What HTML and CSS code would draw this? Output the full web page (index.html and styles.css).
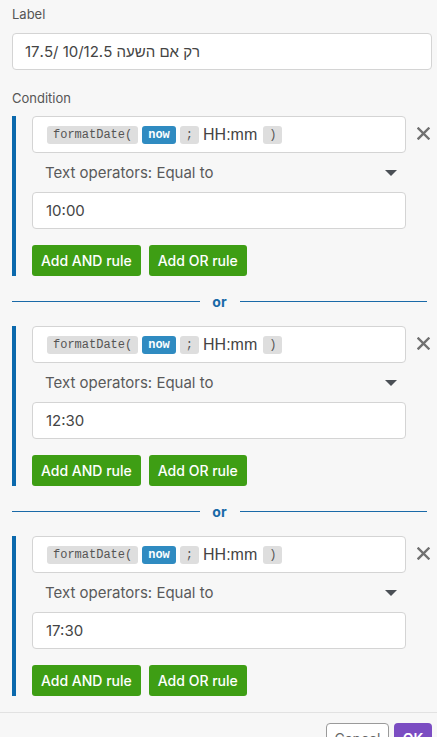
FILE: index.html
```html
<!DOCTYPE html>
<html lang="en">
<head>
<meta charset="utf-8">
<link rel="stylesheet" href="styles.css">
</head>
<body>
<div class="panel">
  <div class="field-label">Label</div>
  <div class="input label-input">17.5/ 10/12.5 רק אם השעה</div>
  <div class="field-label cond-label">Condition</div>

  <div class="group">
    <div class="rule">
      <div class="rule-main">
        <div class="input formula"><span class="chip">formatDate(</span><span class="chip chip-var">now</span><span class="chip">;</span><span class="plain">HH:mm</span><span class="chip">)</span></div>
        <div class="select"><span>Text operators: Equal to</span><svg class="caret" width="12" height="6" viewBox="0 0 12 6"><path d="M0 0H12L6 6Z" fill="#4a4f55"/></svg></div>
        <div class="input value">10:00</div>
      </div>
      <div class="remove"><svg width="13" height="13" viewBox="0 0 13 13"><path d="M1.5 1.5L11.5 11.5M11.5 1.5L1.5 11.5" stroke="#707070" stroke-width="2.4" stroke-linecap="square"/></svg></div>
    </div>
    <div class="actions"><button class="btn-green">Add AND rule</button><button class="btn-green">Add OR rule</button></div>
  </div>

  <div class="or"><span class="or-line"></span><span class="or-text">or</span><span class="or-line"></span></div>

  <div class="group">
    <div class="rule">
      <div class="rule-main">
        <div class="input formula"><span class="chip">formatDate(</span><span class="chip chip-var">now</span><span class="chip">;</span><span class="plain">HH:mm</span><span class="chip">)</span></div>
        <div class="select"><span>Text operators: Equal to</span><svg class="caret" width="12" height="6" viewBox="0 0 12 6"><path d="M0 0H12L6 6Z" fill="#4a4f55"/></svg></div>
        <div class="input value">12:30</div>
      </div>
      <div class="remove"><svg width="13" height="13" viewBox="0 0 13 13"><path d="M1.5 1.5L11.5 11.5M11.5 1.5L1.5 11.5" stroke="#707070" stroke-width="2.4" stroke-linecap="square"/></svg></div>
    </div>
    <div class="actions"><button class="btn-green">Add AND rule</button><button class="btn-green">Add OR rule</button></div>
  </div>

  <div class="or"><span class="or-line"></span><span class="or-text">or</span><span class="or-line"></span></div>

  <div class="group">
    <div class="rule">
      <div class="rule-main">
        <div class="input formula"><span class="chip">formatDate(</span><span class="chip chip-var">now</span><span class="chip">;</span><span class="plain">HH:mm</span><span class="chip">)</span></div>
        <div class="select"><span>Text operators: Equal to</span><svg class="caret" width="12" height="6" viewBox="0 0 12 6"><path d="M0 0H12L6 6Z" fill="#4a4f55"/></svg></div>
        <div class="input value">17:30</div>
      </div>
      <div class="remove"><svg width="13" height="13" viewBox="0 0 13 13"><path d="M1.5 1.5L11.5 11.5M11.5 1.5L1.5 11.5" stroke="#707070" stroke-width="2.4" stroke-linecap="square"/></svg></div>
    </div>
    <div class="actions"><button class="btn-green">Add AND rule</button><button class="btn-green">Add OR rule</button></div>
  </div>
</div>
<div class="footer">
  <button class="btn-cancel">Cancel</button>
  <button class="btn-ok">OK</button>
</div>
</body>
</html>
```

FILE: styles.css
```css
html, body {
  margin: 0;
  padding: 0;
  background: #f7f7f7;
  font-family: Inter, "Noto Sans", "Noto Sans CJK SC", sans-serif;
  color: #555;
  overflow: hidden;
}

.panel {
  padding: 6px 5px 16px 12px;
}

.field-label {
  font-size: 13px;
  line-height: 16px;
  color: #555;
}

.input {
  box-sizing: border-box;
  background: #fff;
  border: 1px solid #d4d4d4;
  border-radius: 4px;
  height: 37px;
  display: flex;
  align-items: center;
  font-size: 15px;
  color: #444;
}

.label-input {
  margin-top: 11px;
  padding-left: 12px;
}

.cond-label {
  margin-top: 20px;
  margin-bottom: 10px;
}

.group {
  border-left: 4px solid #0b69ad;
  padding-left: 16px;
}

.rule {
  display: flex;
}

.rule-main {
  flex: 1;
  display: flex;
  flex-direction: column;
}

.remove {
  width: 26px;
  padding-left: 11px;
  box-sizing: border-box;
  padding-top: 11px;
}

.remove svg {
  display: block;
}

.formula {
  padding-left: 14px;
  gap: 4px;
}

.chip {
  display: inline-block;
  height: 18px;
  line-height: 18px;
  padding: 0 6px;
  background: #dedede;
  border-radius: 3px;
  font-family: "Liberation Mono", monospace;
  font-size: 12px;
  color: #555;
}

.chip-var {
  background: #2f8bc1;
  color: #fff;
  font-weight: bold;
}

.plain {
  font-family: "Liberation Sans", Arial, sans-serif;
  font-size: 16px;
  color: #444;
  margin-right: 2px;
}

.select {
  height: 39px;
  display: flex;
  align-items: center;
  justify-content: space-between;
  padding: 0 9px 0 13px;
  font-size: 15px;
  color: #5a5a5a;
}

.caret {
  display: block;
}

.value {
  padding-left: 13px;
  font-size: 15px;
}

.actions {
  display: flex;
  gap: 8px;
  margin-top: 16px;
}

.btn-green {
  height: 31px;
  padding: 0 9px;
  border: none;
  border-radius: 3px;
  background: #3e9e14;
  color: #fff;
  font-family: Inter, sans-serif;
  font-size: 14px;
  font-weight: 500;
}

.or {
  height: 50px;
  display: flex;
  align-items: center;
  padding-right: 5px;
}

.or-line {
  flex: 1;
  height: 1px;
  background: #1a6aa8;
}

.or-text {
  width: 40px;
  text-align: center;
  font-size: 14px;
  font-weight: 700;
  color: #1a6aa8;
}

.footer {
  border-top: 1px solid #e2e2e2;
  display: flex;
  justify-content: flex-end;
  gap: 5px;
  padding: 10px 5px 0 0;
}

.btn-cancel {
  height: 30px;
  width: 63px;
  box-sizing: border-box;
  border: 1px solid #9a9a9a;
  border-radius: 4px;
  background: #fff;
  color: #666;
  font-family: Inter, sans-serif;
  font-size: 14px;
}

.btn-ok {
  height: 30px;
  width: 38px;
  border: none;
  border-radius: 4px;
  background: #7b4dc2;
  color: #fff;
  font-family: Inter, sans-serif;
  font-size: 14px;
  font-weight: 600;
}
```
